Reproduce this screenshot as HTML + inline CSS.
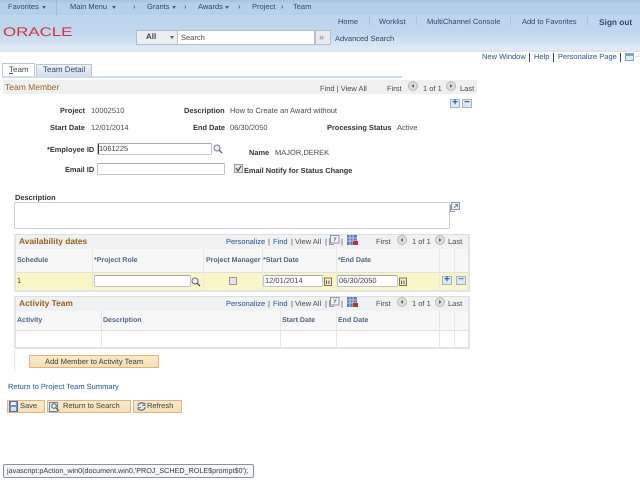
<!DOCTYPE html>
<html><head><meta charset="utf-8">
<style>
html,body{margin:0;padding:0;width:640px;height:480px;overflow:hidden;background:#fff}
body{position:relative;font-family:"Liberation Sans",sans-serif;font-size:7.5px;color:#3c3c3c;text-rendering:geometricPrecision}
#w{position:absolute;left:0;top:0;width:640px;height:480px;filter:blur(0.35px)}
.t{position:absolute;white-space:nowrap;line-height:10px}
.b{font-weight:bold;color:#333;font-size:7.4px}
.n{color:#2d4868}
.l{color:#21528e}
.h{color:#4f6580;font-weight:bold;font-size:7px}
.g{color:#4a4a4a}
.o{color:#95601f;font-weight:bold;font-size:8.4px}
.r{position:absolute;box-sizing:border-box}
.i{position:absolute;box-sizing:border-box;background:#fff;border:1px solid #c2c6ca;border-top-color:#a5a8ac;border-radius:1.5px;font-size:7.5px;color:#3c3c3c;line-height:10px;padding-left:1px;white-space:nowrap}
.btn{position:absolute;box-sizing:border-box;background:linear-gradient(#fbeacc,#f7dfb4);border:1px solid #dcb680;border-radius:1px;color:#444}
.pm{position:absolute;box-sizing:border-box;width:10px;height:9px;background:#dfe8f2;border:1px solid #9db5cf;color:#2a5f9e;font:bold 10px/6px "Liberation Sans",sans-serif;text-align:center}
.tri{position:absolute;width:0;height:0;border:2.5px solid transparent;border-top:3px solid #46607c;border-bottom:0}
svg{position:absolute;overflow:visible}
</style></head><body><div id="w">

<div class="r" style="left:0;top:0;width:640px;height:15px;background:linear-gradient(#a4c3de,#b5d0e9 25%,#b5d0e9)"></div>
<div class="r" style="left:0;top:15px;width:640px;height:36px;background:linear-gradient(#bdd5ee,#c0d7ef 50%,#e4edf7)"></div>
<div class="r" style="left:0;top:50px;width:640px;height:2px;background:#dfe3ea"></div>
<div class="r" style="left:56px;top:0;width:1px;height:15px;background:#9cbcd9"></div>

<div class="t n" style="left:8px;top:2px">Favorites</div><div class="tri" style="left:42px;top:6px"></div>
<div class="t n" style="left:70px;top:2px">Main Menu</div><div class="tri" style="left:112px;top:6px"></div>
<div class="t n" style="left:133px;top:2px">›</div>
<div class="t n" style="left:147px;top:2px">Grants</div><div class="tri" style="left:172px;top:6px"></div>
<div class="t n" style="left:184px;top:2px">›</div>
<div class="t n" style="left:198px;top:2px">Awards</div><div class="tri" style="left:225px;top:6px"></div>
<div class="t n" style="left:238px;top:2px">›</div>
<div class="t n" style="left:252px;top:2px">Project</div>
<div class="t n" style="left:281px;top:2px">›</div>
<div class="t n" style="left:293px;top:2px">Team</div>

<div class="t n" style="left:338px;top:17px">Home</div>
<div class="r" style="left:369px;top:17px;width:1px;height:8px;background:#a9c0d8"></div>
<div class="t n" style="left:379px;top:17px">Worklist</div>
<div class="r" style="left:416px;top:17px;width:1px;height:8px;background:#a9c0d8"></div>
<div class="t n" style="left:427px;top:17px">MultiChannel Console</div>
<div class="r" style="left:510px;top:17px;width:1px;height:8px;background:#a9c0d8"></div>
<div class="t n" style="left:522px;top:17px">Add to Favorites</div>
<div class="r" style="left:587px;top:17px;width:1px;height:8px;background:#a9c0d8"></div>
<div class="t" style="left:599px;top:17px;font-weight:bold;font-size:8.3px;color:#2e4a70">Sign out</div>

<div class="t" style="left:3px;top:26px;color:#d8343a;font-size:12.5px;line-height:12px;transform:scaleX(1.35);transform-origin:0 0">ORACLE</div>

<div class="r" style="left:136px;top:30px;width:42px;height:15px;background:#e9eef0;border:1px solid #b7bfc6;border-right:0"></div>
<div class="t" style="left:146px;top:32px;font-weight:bold;color:#444;font-size:8px">All</div>
<div class="tri" style="left:170px;top:36px"></div>
<div class="r" style="left:177px;top:30px;width:138px;height:15px;background:#fff;border:1px solid #b7bfc6"></div>
<div class="t g" style="left:181px;top:32.500px">Search</div>
<div class="r" style="left:315px;top:30px;width:16px;height:15px;background:#e8ebee;border:1px solid #b7bfc6"></div>
<div class="t" style="left:319px;top:32px;color:#778;font-size:9px">»</div>
<div class="t n" style="left:335px;top:33.500px">Advanced Search</div>

<div class="t l" style="left:482px;top:52px">New Window</div>
<div class="r" style="left:529px;top:53px;width:1px;height:9px;background:#5a3a7a"></div>
<div class="t l" style="left:534px;top:52px">Help</div>
<div class="r" style="left:553px;top:53px;width:1px;height:9px;background:#3a3a7a"></div>
<div class="t l" style="left:558px;top:52px">Personalize Page</div>
<div class="r" style="left:620px;top:53px;width:1px;height:9px;background:#3a3a7a"></div>
<div class="r" style="left:625px;top:53px;width:9px;height:8px;background:linear-gradient(#7fa4cc 30%,#dde8f3 30%);border:1px solid #7fa4cc"></div>
<div class="r" style="left:635px;top:56px;width:5px;height:1px;background:#dde"></div>

<div class="r" style="left:2px;top:63px;width:33px;height:14px;background:#fff;border:1px solid #b9c4cf;border-bottom:0"></div>
<div class="t g" style="left:9px;top:65px;font-size:8px"><u>T</u>eam</div>
<div class="r" style="left:36px;top:64px;width:56px;height:13px;background:linear-gradient(#f0f3f7,#cfdced);border:1px solid #b9c4cf;border-bottom:0"></div>
<div class="t n" style="left:43px;top:65px;font-size:8px">Team Detail</div>
<div class="r" style="left:2px;top:76px;width:400px;height:1.5px;background:#cfdcf0"></div>

<div class="r" style="left:3px;top:80px;width:474px;height:14px;background:#f0f0f0"></div>
<div class="t" style="left:5px;top:82px;color:#9a6428;font-size:8.5px">Team Member</div>
<div class="t g" style="left:320px;top:83.500px">Find | View All</div>
<div class="t g" style="left:387px;top:83.500px">First</div>
<svg style="left:408px;top:81px" width="10" height="10"><circle cx="5" cy="5" r="4.5" fill="#ddd" stroke="#bbb"/><path d="M6 3L3.5 5 6 7z" fill="#666"/></svg>
<div class="t g" style="left:423px;top:83.500px">1 of 1</div>
<svg style="left:446px;top:81px" width="10" height="10"><circle cx="5" cy="5" r="4.5" fill="#ddd" stroke="#bbb"/><path d="M4 3L6.5 5 4 7z" fill="#666"/></svg>
<div class="t g" style="left:460px;top:83.500px">Last</div>
<div class="pm" style="left:450px;top:99px">+</div>
<div class="pm" style="left:462px;top:99px;color:#555">−</div>

<div class="t b" style="left:60px;top:105.500px">Project</div>
<div class="t g" style="left:91px;top:105.500px">10002510</div>
<div class="t b" style="left:184px;top:105.500px">Description</div>
<div class="t g" style="left:230px;top:105.500px">How to Create an Award without</div>
<div class="t b" style="left:50px;top:122.500px">Start Date</div>
<div class="t g" style="left:91px;top:122.500px">12/01/2014</div>
<div class="t b" style="left:193px;top:122.500px">End Date</div>
<div class="t g" style="left:230px;top:122.500px">06/30/2050</div>
<div class="t b" style="left:327px;top:122.500px">Processing Status</div>
<div class="t g" style="left:397px;top:122.500px">Active</div>

<div class="t b" style="left:47px;top:144.500px">*Employee ID</div>
<div class="i" style="left:97px;top:143px;width:115px;height:12px">1061225</div>
<div class="r" style="left:98px;top:144px;width:1px;height:10px;background:#333"></div>
<svg style="left:213px;top:144px" width="10" height="10"><circle cx="4" cy="4" r="3" fill="#e8eef5" stroke="#778"/><path d="M6 6L9 9" stroke="#667" stroke-width="1.3"/></svg>
<div class="t b" style="left:249px;top:147.500px">Name</div>
<div class="t g" style="left:275px;top:147.500px">MAJOR,DEREK</div>
<div class="t b" style="left:65px;top:165px">Email ID</div>
<div class="i" style="left:97px;top:163px;width:128px;height:12px"></div>
<div class="r" style="left:234px;top:164px;width:9px;height:9px;background:#e4e8ee;border:1px solid #999"></div>
<svg style="left:235px;top:165px" width="7" height="7"><path d="M1 3L3 6 6 1" fill="none" stroke="#445" stroke-width="1.2"/></svg>
<div class="t b" style="left:244px;top:165.500px">Email Notify for Status Change</div>

<div class="t b" style="left:15px;top:192.500px">Description</div>
<div class="i" style="left:14px;top:202px;width:436px;height:27px;border-color:#ccd"></div>
<svg style="left:450px;top:202px" width="10" height="10"><rect x="1.5" y=".5" width="8" height="7" fill="#e8eef5" stroke="#8a98a8"/><path d="M4 6L7 3M5 2.500H7.500V5" fill="none" stroke="#667" stroke-width=".8"/><path d="M.5 3V9.500H5" fill="none" stroke="#99a"/></svg>

<!-- Availability -->
<div class="r" style="left:15px;top:234px;width:455px;height:15px;background:#f0f1f2;border-top:1px solid #dcdfe0"></div>
<div class="t o" style="left:19px;top:236px">Availability dates</div>
<div class="r" style="left:16px;top:249px;width:453px;height:24px;background:#f7f7f8;border-bottom:1px solid #e0e0e0"></div>
<div class="r" style="left:16px;top:273px;width:453px;height:17px;background:#f8f6c6"></div>
<div class="r" style="left:14px;top:234px;width:2px;height:57px;background:#e2e4e6"></div>
<div class="r" style="left:468px;top:234px;width:2px;height:57px;background:#e2e4e6"></div>
<div class="r" style="left:14px;top:290px;width:456px;height:1.5px;background:#e2e4e6"></div>
<div class="r" style="left:92px;top:249px;width:1px;height:41px;background:#e8e8e0"></div>
<div class="r" style="left:203px;top:249px;width:1px;height:41px;background:#e8e8e0"></div>
<div class="r" style="left:262px;top:249px;width:1px;height:41px;background:#e8e8e0"></div>
<div class="r" style="left:336px;top:249px;width:1px;height:41px;background:#e8e8e0"></div>
<div class="r" style="left:439px;top:249px;width:1px;height:41px;background:#e8e8e0"></div>
<div class="r" style="left:454px;top:249px;width:1px;height:41px;background:#e8e8e0"></div>

<div class="t l" style="left:226px;top:237px">Personalize</div>
<div class="t g" style="left:268px;top:237px">|</div>
<div class="t l" style="left:273px;top:237px">Find</div>
<div class="t g" style="left:291px;top:237px">|</div>
<div class="t g" style="left:295px;top:237px">View All</div>
<div class="t g" style="left:325px;top:237px">|</div>
<svg style="left:329px;top:235px" width="11" height="10"><rect x="1.500" y=".5" width="8.500" height="7.500" fill="#eef2f6" stroke="#8a98a8"/><path d="M.5 3V9.500H5" fill="none" stroke="#99a"/><path d="M4.500 3H7L5 6" fill="none" stroke="#667" stroke-width=".7"/></svg>
<div class="t g" style="left:341px;top:237px">|</div>
<svg style="left:347px;top:235px" width="11" height="11"><rect width="10" height="10" fill="#5b7fae"/><path d="M0 3H10M0 6H10M3 0V10M6 0V10" stroke="#dde" stroke-width=".7"/><rect x="6" y="6" width="5" height="4" fill="#b33"/></svg>
<div class="t g" style="left:376px;top:237px">First</div>
<svg style="left:397px;top:235px" width="10" height="10"><circle cx="5" cy="5" r="4.5" fill="#ddd" stroke="#bbb"/><path d="M6 3L3.5 5 6 7z" fill="#666"/></svg>
<div class="t g" style="left:412px;top:237px">1 of 1</div>
<svg style="left:435px;top:235px" width="10" height="10"><circle cx="5" cy="5" r="4.5" fill="#ddd" stroke="#bbb"/><path d="M4 3L6.5 5 4 7z" fill="#666"/></svg>
<div class="t g" style="left:448px;top:237px">Last</div>

<div class="t h" style="left:17px;top:255.500px">Schedule</div>
<div class="t h" style="left:94px;top:255.500px">*Project Role</div>
<div class="t h" style="left:206px;top:255.500px">Project Manager</div>
<div class="t h" style="left:263px;top:255.500px">*Start Date</div>
<div class="t h" style="left:338px;top:255.500px">*End Date</div>

<div class="t g" style="left:17px;top:276px">1</div>
<div class="i" style="left:94px;top:275px;width:97px;height:12px"></div>
<svg style="left:191px;top:277px" width="10" height="10"><circle cx="4" cy="4" r="3" fill="#eef" stroke="#667"/><path d="M6 6L9 9" stroke="#556" stroke-width="1.3"/></svg>
<div class="r" style="left:229px;top:277px;width:8px;height:8px;background:#e2e4e8;border:1px solid #999"></div>
<div class="i" style="left:263px;top:275px;width:60px;height:12px">12/01/2014</div>
<svg style="left:324px;top:277px" width="8" height="9"><rect x=".5" y="1" width="7" height="7.5" fill="#f5edc8" stroke="#85744a"/><path d="M2.500 3.500V7M5 3.500V7" stroke="#555"/></svg>
<div class="i" style="left:337px;top:275px;width:61px;height:12px">06/30/2050</div>
<svg style="left:399px;top:277px" width="8" height="9"><rect x=".5" y="1" width="7" height="7.5" fill="#f5edc8" stroke="#85744a"/><path d="M2.500 3.500V7M5 3.500V7" stroke="#555"/></svg>
<div class="pm" style="left:442px;top:276px">+</div>
<div class="pm" style="left:456px;top:276px;color:#5c7894">−</div>

<!-- Activity -->
<div class="r" style="left:15px;top:296px;width:455px;height:15px;background:#f0f1f2;border-top:1px solid #dcdfe0"></div>
<div class="t o" style="left:19px;top:298px">Activity Team</div>
<div class="r" style="left:16px;top:311px;width:453px;height:20px;background:#f7f7f8;border-bottom:1px solid #e0e0e0"></div>
<div class="r" style="left:14px;top:296px;width:2px;height:53px;background:#e2e4e6"></div>
<div class="r" style="left:468px;top:296px;width:2px;height:53px;background:#e2e4e6"></div>
<div class="r" style="left:14px;top:347px;width:456px;height:2px;background:#e2e4e6"></div>
<div class="r" style="left:101px;top:311px;width:1px;height:36px;background:#e6e6e6"></div>
<div class="r" style="left:280px;top:311px;width:1px;height:36px;background:#e6e6e6"></div>
<div class="r" style="left:336px;top:311px;width:1px;height:36px;background:#e6e6e6"></div>
<div class="r" style="left:439px;top:311px;width:1px;height:36px;background:#e6e6e6"></div>
<div class="r" style="left:454px;top:311px;width:1px;height:36px;background:#e6e6e6"></div>

<div class="t l" style="left:226px;top:299px">Personalize</div>
<div class="t g" style="left:268px;top:299px">|</div>
<div class="t l" style="left:273px;top:299px">Find</div>
<div class="t g" style="left:291px;top:299px">|</div>
<div class="t g" style="left:295px;top:299px">View All</div>
<div class="t g" style="left:325px;top:299px">|</div>
<svg style="left:329px;top:297px" width="11" height="10"><rect x="1.500" y=".5" width="8.500" height="7.500" fill="#eef2f6" stroke="#8a98a8"/><path d="M.5 3V9.500H5" fill="none" stroke="#99a"/><path d="M4.500 3H7L5 6" fill="none" stroke="#667" stroke-width=".7"/></svg>
<div class="t g" style="left:341px;top:299px">|</div>
<svg style="left:347px;top:297px" width="11" height="11"><rect width="10" height="10" fill="#5b7fae"/><path d="M0 3H10M0 6H10M3 0V10M6 0V10" stroke="#dde" stroke-width=".7"/><rect x="6" y="6" width="5" height="4" fill="#b33"/></svg>
<div class="t g" style="left:376px;top:299px">First</div>
<svg style="left:397px;top:297px" width="10" height="10"><circle cx="5" cy="5" r="4.5" fill="#ddd" stroke="#bbb"/><path d="M6 3L3.5 5 6 7z" fill="#666"/></svg>
<div class="t g" style="left:412px;top:299px">1 of 1</div>
<svg style="left:435px;top:297px" width="10" height="10"><circle cx="5" cy="5" r="4.5" fill="#ddd" stroke="#bbb"/><path d="M4 3L6.5 5 4 7z" fill="#666"/></svg>
<div class="t g" style="left:448px;top:299px">Last</div>

<div class="t h" style="left:17px;top:315.500px">Activity</div>
<div class="t h" style="left:103px;top:315.500px">Description</div>
<div class="t h" style="left:282px;top:315.500px">Start Date</div>
<div class="t h" style="left:338px;top:315.500px">End Date</div>

<div class="r" style="left:14px;top:350px;width:1px;height:21px;background:#e4e4e4"></div>
<div class="btn" style="left:29px;top:355px;width:130px;height:13px"></div>
<div class="t" style="left:45px;top:356.500px;font-size:7.6px">Add Member to Activity Team</div>

<div class="t l" style="left:8px;top:382px">Return to Project Team Summary</div>

<div class="btn" style="left:7px;top:400px;width:38px;height:13px"></div>
<svg style="left:9px;top:401px" width="9" height="11"><rect x=".5" y=".5" width="8" height="10" fill="#6d94c4" stroke="#4d6f9c"/><rect x="2" y="1" width="5" height="3" fill="#eef"/><rect x="2" y="6" width="5" height="4" fill="#dde"/></svg>
<div class="t" style="left:20px;top:400.500px">Save</div>
<div class="btn" style="left:47px;top:400px;width:84px;height:13px"></div>
<svg style="left:49px;top:401px" width="11" height="11"><rect x=".5" y="1.500" width="8" height="9" fill="#e8f0f8" stroke="#5f82ad"/><circle cx="5" cy="5" r="2.300" fill="none" stroke="#556"/><path d="M7 7L10 10" stroke="#8a5a20" stroke-width="1.200"/></svg>
<div class="t" style="left:63px;top:400.500px">Return to Search</div>
<div class="btn" style="left:133px;top:400px;width:49px;height:13px"></div>
<svg style="left:137px;top:402px" width="9" height="9"><path d="M1 4A3.500 3.500 0 0 1 7.500 2.500M8 5A3.500 3.500 0 0 1 1.500 6.500" fill="none" stroke="#4a72a8" stroke-width="1.200"/><path d="M8 .5V3.500H5M1 8.500V5.500H4" fill="none" stroke="#4a72a8" stroke-width=".8"/></svg>
<div class="t" style="left:147px;top:400.500px">Refresh</div>

<div class="r" style="left:3px;top:464px;width:251px;height:14px;background:#f4f6f8;border:1px solid #8a93a0;border-radius:2px"></div>
<div class="t" style="left:7px;top:466px;color:#2f3a48;font-size:7.2px">javascript:pAction_win0(document.win0,'PROJ_SCHED_ROLE$prompt$0');</div>

</div></body></html>
